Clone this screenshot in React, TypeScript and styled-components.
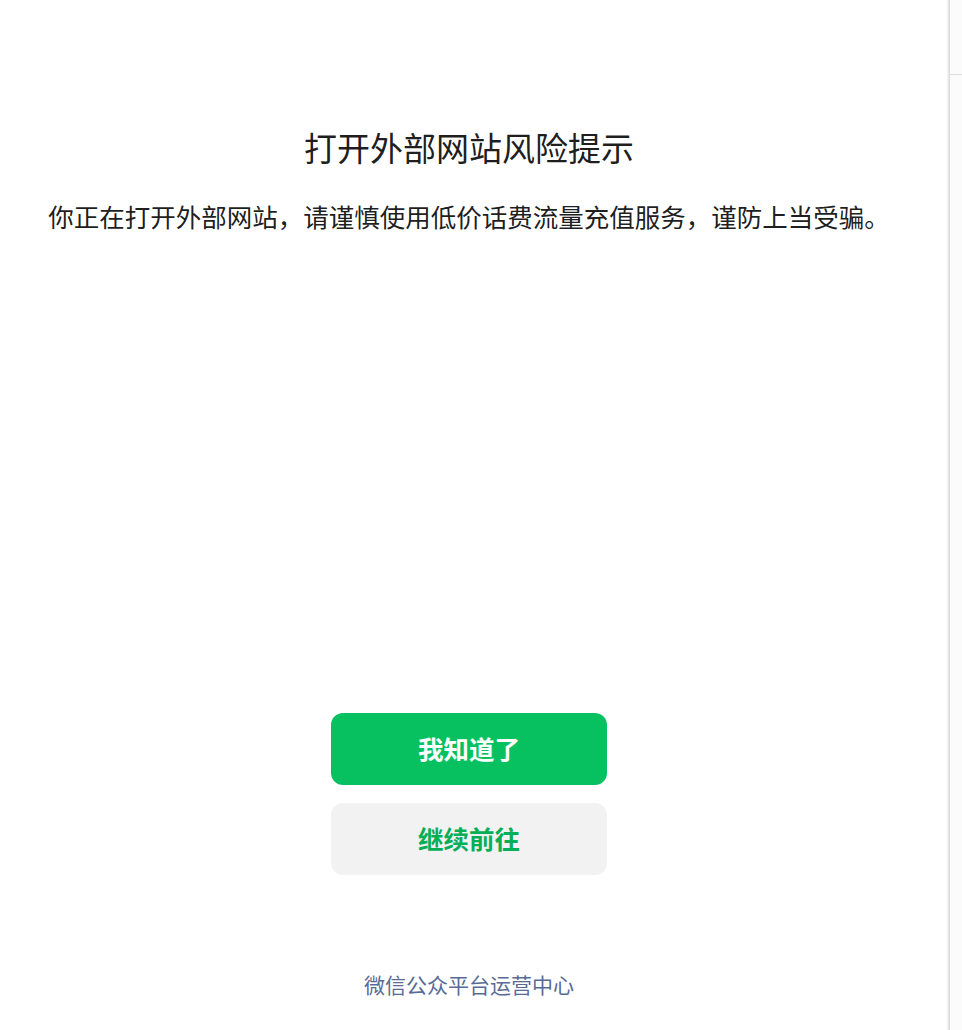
import React from "react";
import styled, { createGlobalStyle } from "styled-components";

const Global = createGlobalStyle`
  html, body { margin: 0; padding: 0; background: #fff; }
  body { font-family: "Noto Sans CJK SC", "Noto Sans", sans-serif; }
`;

const Page = styled.div`
  display: flex;
  width: 962px;
  height: 1030px;
  overflow: hidden;
`;

const Main = styled.main`
  flex: 1;
  display: flex;
  flex-direction: column;
  align-items: center;
  padding-right: 8px;
  background: #fff;
`;

const Side = styled.aside`
  width: 16px;
  display: flex;
  flex-direction: column;
  background: linear-gradient(to right, #fff 0px, #f1f1f1 2px, #dcdcdc 3px, #dcdcdc 4px, #fbfbfb 4px, #fbfbfb 100%);
`;

const SideTop = styled.div`
  height: 74px;
  border-bottom: 1px solid #dedede;
  margin-left: 3px;
`;

const Title = styled.h1`
  margin: 123px 0 0;
  font-size: 33px;
  font-weight: 400;
  line-height: 48px;
  color: rgba(0, 0, 0, 0.9);
`;

const Desc = styled.p`
  margin: 27px 0 0;
  font-size: 25.5px;
  line-height: 36px;
  color: rgba(0, 0, 0, 0.9);
  white-space: nowrap;
`;

const Actions = styled.div`
  margin-top: auto;
  display: flex;
  flex-direction: column;
  gap: 18px;
`;

const Button = styled.button<{ $primary?: boolean }>`
  width: 276px;
  height: 72px;
  padding: 0 0 3px;
  border: none;
  border-radius: 12px;
  font-family: inherit;
  font-size: 25.5px;
  font-weight: 700;
  cursor: pointer;
  background: ${(p) => (p.$primary ? "#07c160" : "#f2f2f2")};
  color: ${(p) => (p.$primary ? "#fff" : "#06ae56")};
`;

const Footer = styled.footer`
  margin: 94px 0 31px;
  font-size: 21px;
  line-height: 30px;
  color: #576b95;
`;

export default function App() {
  return (
    <>
      <Global />
      <Page>
        <Main>
          <Title>打开外部网站风险提示</Title>
          <Desc>你正在打开外部网站，请谨慎使用低价话费流量充值服务，谨防上当受骗。</Desc>
          <Actions>
            <Button $primary>我知道了</Button>
            <Button>继续前往</Button>
          </Actions>
          <Footer>微信公众平台运营中心</Footer>
        </Main>
        <Side>
          <SideTop />
        </Side>
      </Page>
    </>
  );
}
